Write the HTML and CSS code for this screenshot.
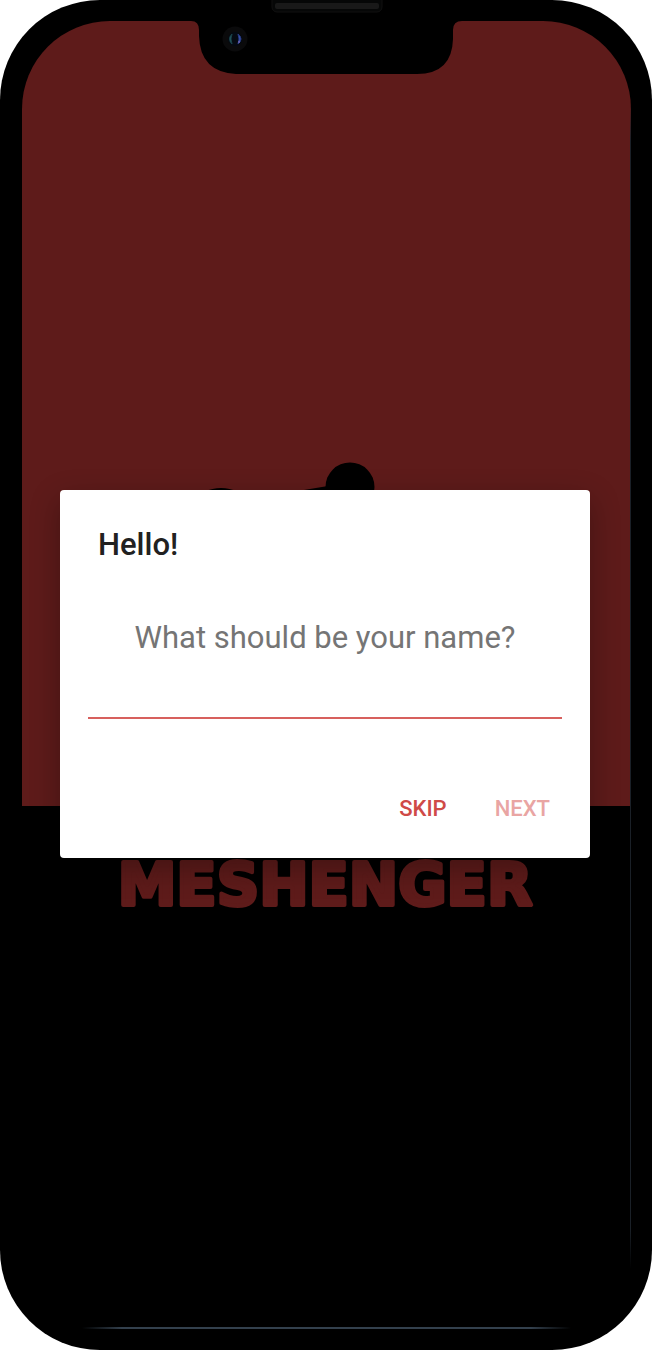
FILE: index.html
```html
<!DOCTYPE html>
<html lang="en">
<head>
<meta charset="utf-8">
<meta name="viewport" content="width=device-width, initial-scale=1">
<title>Meshenger</title>
<link rel="stylesheet" href="styles.css">
</head>
<body>
<div class="phone">
  <svg class="notch" width="280" height="75" viewBox="0 0 280 75" aria-hidden="true">
    <path d="M0 0H280V21H275Q266 21 266 30V39Q265 74 230 74H49Q13 72 12 36V30Q12 21 4 21H0Z" fill="#000"/>
    <rect x="85" y="-6" width="110" height="18" rx="5" fill="#060707" stroke="#111" />
    <rect x="88" y="3" width="104" height="6" rx="2" fill="#191919"/>
    <circle cx="48" cy="39" r="12.500" fill="#0a0a0b"/>
    <circle cx="48" cy="39" r="7" fill="#050a12"/>
    <path d="M45 34Q40 39 45 44Q43 39 45 34Z" fill="#286068" stroke="#183f46"/>
    <path d="M51 34Q57 39 51 44Q53 39 51 34Z" fill="#4058b0" stroke="#263982"/>
    <circle cx="52" cy="42" r="1" fill="#7062b0"/>
  </svg>
  <div class="screen">
    <div class="splash">
      <div class="splash-top">
        <svg width="260" height="345" viewBox="197 461 260 345" aria-hidden="true">
          <circle cx="350" cy="487" r="24.500"/>
          <ellipse cx="221" cy="500" rx="22" ry="12"/>
          <path d="M304 490L328 486V510H304Z"/>
        </svg>
      </div>
      <div class="splash-bottom">
        <svg class="wordmark" width="440" height="70" viewBox="0 0 440 70" role="img" aria-label="Meshenger">
          <text x="218" y="55" text-anchor="middle">MESHENGER</text>
        </svg>
      </div>
    </div>
    <form class="dialog" role="dialog" aria-labelledby="title">
      <h1 id="title" class="title">Hello!</h1>
      <label class="prompt" for="name">What should be your name?</label>
      <input class="field" id="name" type="text">
      <div class="actions">
        <button class="button" type="button">SKIP</button>
        <button class="button" type="submit" disabled>NEXT</button>
      </div>
    </form>
  </div>
</div>
</body>
</html>
```
FILE: styles.css
```css
* {
  box-sizing: border-box;
}

body {
  margin: 0;
  background: #fff;
  font-family: Roboto, sans-serif;
}

.phone {
  position: relative;
  display: flex;
  min-height: 100vh;
  padding: 21px 21px 21px 22px;
  background: #000;
  border-radius: 100px;
}

.notch {
  position: absolute;
  z-index: 1;
  top: 0;
  left: 50%;
  margin-left: -139px;
}

.screen {
  position: relative;
  display: grid;
  flex: 1;
}

.screen::before,
.screen::after {
  content: "";
  position: absolute;
}

.screen::before {
  inset: 80px 0 60px auto;
  width: 1px;
  background: linear-gradient(transparent, #1a2027 40px, #1a2027 calc(100% - 40px), transparent);
}

.screen::after {
  inset: auto 60px 0;
  height: 2px;
  background: linear-gradient(90deg, transparent, #33404d 40px, #33404d calc(100% - 40px), transparent);
}

.splash,
.dialog {
  grid-area: 1 / 1;
}

.splash {
  display: flex;
  flex-direction: column;
  border-radius: 88px;
  overflow: hidden;
}

.splash-top {
  display: flex;
  flex: 6 0 0;
  align-items: flex-end;
  justify-content: center;
  background: #5e1b1a;
}

.splash-top svg {
  display: block;
}

.splash-bottom {
  display: flex;
  flex: 4 0 0;
  align-items: flex-start;
  justify-content: center;
}

.wordmark {
  max-width: 100%;
  margin-top: 44px;
  overflow: visible;
  font: bold 59px "DejaVu Sans", sans-serif;
  fill: #5e1b1a;
  stroke: #5e1b1a;
  stroke-width: 4px;
  stroke-linejoin: round;
}

.dialog {
  z-index: 1;
  display: flex;
  flex-direction: column;
  align-self: center;
  margin: 0 41px 2px 38px;
  padding: 37px 28px 23px;
  background: #fff;
  border-radius: 4px;
  box-shadow: 0 10px 30px rgba(0, 0, 0, 0.3);
}

.title {
  margin: 0;
  padding: 0 10px;
  color: #212121;
  font-size: 31px;
  font-weight: 500;
  line-height: 36px;
}

.prompt {
  padding-top: 55px;
  color: #757575;
  font-size: 31px;
  line-height: 40px;
  text-align: center;
  white-space: nowrap;
}

.field {
  width: 100%;
  height: 61px;
  padding: 0 4px;
  border: 0;
  border-bottom: 2px solid #d7605d;
  background: transparent;
  font: 31px Roboto, sans-serif;
  outline: 0;
}

.actions {
  display: flex;
  justify-content: flex-end;
  gap: 24px;
  padding-top: 64px;
}

.button {
  padding: 12px;
  border: 0;
  background: transparent;
  color: #cf4a47;
  font: 500 22px/28px Roboto, sans-serif;
}

.button:disabled {
  color: #e9a5a3;
}
```
